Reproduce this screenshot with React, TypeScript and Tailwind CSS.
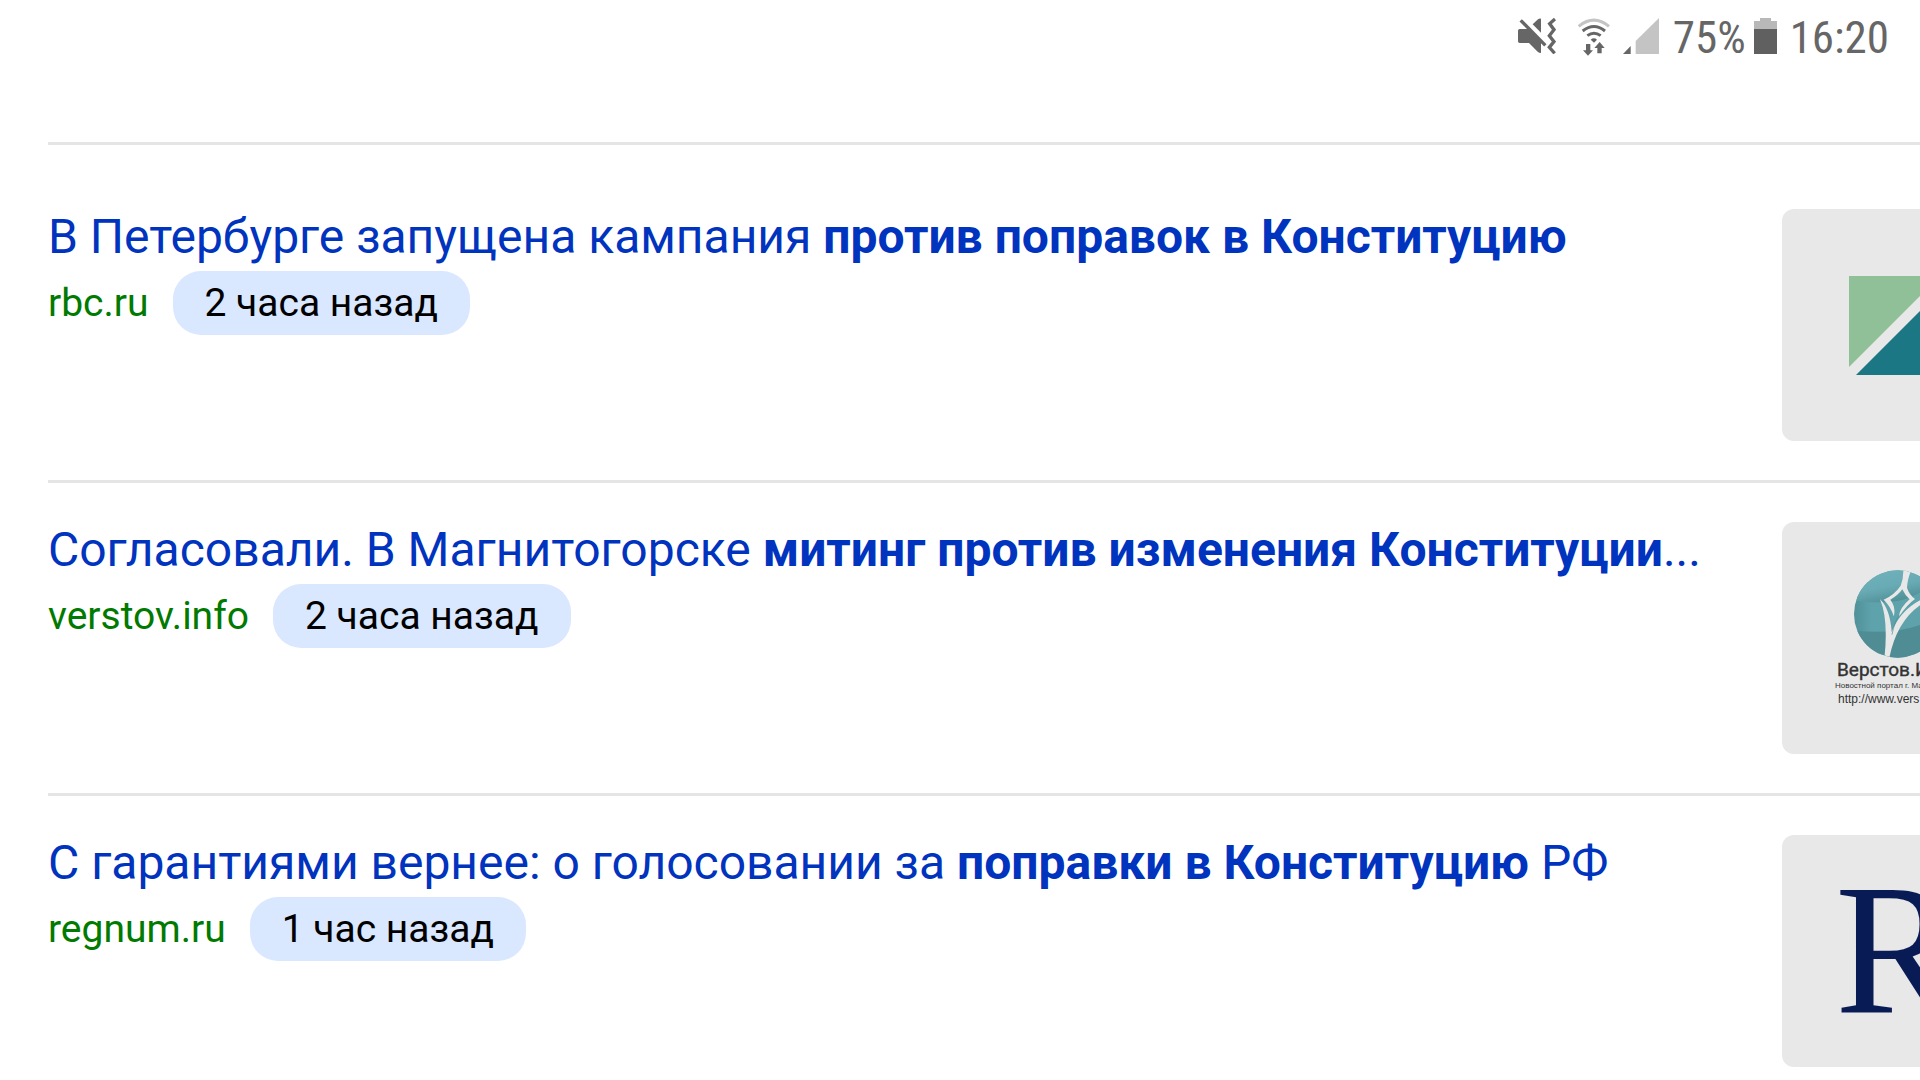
import type { ReactNode } from "react";

function MutedIcon() {
  return (
    <svg className="mr-[22px] h-9 w-[38px]" viewBox="54 54 114 108" aria-label="Без звука">
      <path d="M98 73l16-15q4-3 9-2v42z" fill="#666" />
      <path d="M70 54l73 74" stroke="#fff" strokeWidth="8" />
      <path d="M54 92q0-5 5-5h26l38 40v32q-6 0-10-4L87 129H59q-5 0-5-5z" fill="#666" />
      <path d="M62 61l74 75" stroke="#666" strokeWidth="10" />
      <path d="M165 57l-16 14 13 18-14 18 14 18-14 17 16 18" fill="none" stroke="#666" strokeWidth="10" />
    </svg>
  );
}

function WifiIcon() {
  return (
    <svg className="mr-[13px] h-[38px] w-8" viewBox="236 50 96 114" aria-label="Wi-Fi">
      <g fill="none" strokeWidth="9">
        <path d="M238 75q46-37 91 0" stroke="#c4c4c4" />
        <path d="M250 89q34-27 67 0" stroke="#666" />
        <path d="M264 103q20-15 40 0" stroke="#666" />
      </g>
      <path d="M274 115q10-8 19 0l-9 9z" fill="#666" />
      <path d="M260 128h13v19h8l-15 16-15-16h9zM294 156v-16h-9l16-18 15 18h-9v16z" fill="#666" />
    </svg>
  );
}

function SignalIcon() {
  return (
    <svg className="mr-[14px] size-9" viewBox="370 54 108 108" aria-label="Сигнал сети">
      <path d="M370 162l23-24v24z" fill="#666" />
      <path d="M408 162v-39l70-69v108z" fill="#c4c4c4" />
    </svg>
  );
}

function BatteryIcon() {
  return (
    <svg className="mr-[13px] ml-2 h-9 w-[23px]" viewBox="762 54 69 108" aria-label="Батарея">
      <path d="M762 63h18v-9h33v9h18v26h-69z" fill="#b8b8b8" />
      <path d="M762 87h69v75h-69z" fill="#606060" />
    </svg>
  );
}

function RbcLogo() {
  return (
    <svg className="h-full w-full" viewBox="0 0 138 232" preserveAspectRatio="xMinYMin" aria-hidden="true">
      <path d="M67 67h71v20l-71 71z" fill="#8fc098" />
      <path d="M74 166l64-64v64z" fill="#1b7783" />
    </svg>
  );
}

function VerstovLogo() {
  return (
    <svg className="h-full w-full" viewBox="0 0 138 232" preserveAspectRatio="xMinYMin">
      <defs>
        <clipPath id="disc">
          <circle cx="413" cy="342" r="131" />
        </clipPath>
        <linearGradient id="cap" x1="0" y1="0" x2="0.5" y2="1">
          <stop offset="0" stopColor="#72b3bd" />
          <stop offset="0.6" stopColor="#69abb5" />
          <stop offset="1" stopColor="#4e8d94" />
        </linearGradient>
        <linearGradient id="band" x1="0" y1="0" x2="1" y2="0">
          <stop offset="0" stopColor="#4f9098" />
          <stop offset="0.2" stopColor="#5ea2ab" />
          <stop offset="1" stopColor="#5ea2ab" />
        </linearGradient>
      </defs>
      <g transform="translate(-22 -22) scale(0.33333)">
        <g clipPath="url(#disc)">
          <path d="M280 210h270v270H280z" fill="url(#band)" />
          <path d="M280 200h270v20q-80 86-170 86-60 3-100-6z" fill="url(#cap)" />
          <path d="M280 392q120 12 200-17l70-40v150H280z" fill="#508c93" />
          <g fill="#e8e8e8">
            <path d="M430 206h26q-14 30-15 57 6 20 24 34-24 17-49 54 4-29 33-53-14-12-22-30-13 18-36 31 18 25 10 50-8-29-30-50 32-14 51-42 9-22 8-51z" />
            <path d="M360 298q30 28 35 98 26-66 90-98v14q-76 50-98 166l-14-2q13-117-13-178z" />
          </g>
          <path d="M396 404q8-42 22-58" fill="none" stroke="#508c93" strokeWidth="2" />
        </g>
      </g>
      <g fill="#333">
        <text x="55" y="154" fontSize="19" fontFamily="Roboto, sans-serif" stroke="#333" strokeWidth="0.4">Верстов.И</text>
        <text x="53" y="166" fontSize="8" fontFamily="Liberation Sans, sans-serif">Новостной портал г. Ма</text>
        <text x="56" y="181" fontSize="12" fontFamily="Liberation Sans, sans-serif">http://www.vers</text>
      </g>
    </svg>
  );
}

function RegnumLogo() {
  return (
    <svg className="h-full w-full" viewBox="0 0 138 232" preserveAspectRatio="xMinYMin">
      <text x="53" y="178" fontSize="186" fill="#091b55" fontFamily="Liberation Serif, serif">R</text>
    </svg>
  );
}

type Item = { title: ReactNode; source: string; time: string; logo: ReactNode };

const items: Item[] = [
  {
    title: <>В Петербурге запущена кампания <b>против поправок в Конституцию</b></>,
    source: "rbc.ru",
    time: "2 часа назад",
    logo: <RbcLogo />,
  },
  {
    title: <>Согласовали. В Магнитогорске <b>митинг против изменения Конституции</b>...</>,
    source: "verstov.info",
    time: "2 часа назад",
    logo: <VerstovLogo />,
  },
  {
    title: <>С гарантиями вернее: о голосовании за <b>поправки в Конституцию</b> РФ</>,
    source: "regnum.ru",
    time: "1 час назад",
    logo: <RegnumLogo />,
  },
];

function NewsRow({ item, first }: { item: Item; first: boolean }) {
  return (
    <li className={`flex items-start justify-between border-t-3 border-[#e5e5e5] pb-[39px] ${first ? "pt-16" : "pt-[39px]"}`}>
      <div className="min-w-0">
        <h2 className="text-[48px] leading-[56px] whitespace-nowrap text-[#0033be]">
          <a href="#">{item.title}</a>
        </h2>
        <div className="mt-1.5 flex items-center text-[39px] leading-[64px]">
          <a href="#" className="text-[#007a00]">{item.source}</a>
          <time className="ml-6 rounded-[28px] bg-[#d9e7ff] px-8 text-black">{item.time}</time>
        </div>
      </div>
      <a href="#" aria-label={item.source} className="block h-[232px] w-[138px] shrink-0 overflow-hidden rounded-l-xl bg-[#e8e8e8]">
        {item.logo}
      </a>
    </li>
  );
}

export default function App() {
  return (
    <div className="min-h-screen overflow-hidden bg-white font-['Roboto',sans-serif]">
      <header className="flex h-[142px] items-start justify-end pt-[18px] pr-[31px] text-[#666]">
        <MutedIcon />
        <WifiIcon />
        <SignalIcon />
        <span className="font-['Roboto_Condensed','Roboto',sans-serif] text-[45px] leading-10">75%</span>
        <BatteryIcon />
        <time className="font-['Roboto_Condensed','Roboto',sans-serif] text-[45px] leading-10">16:20</time>
      </header>
      <main>
        <ul className="ml-12">
          {items.map((item, i) => (
            <NewsRow key={item.source} item={item} first={i === 0} />
          ))}
        </ul>
      </main>
    </div>
  );
}
